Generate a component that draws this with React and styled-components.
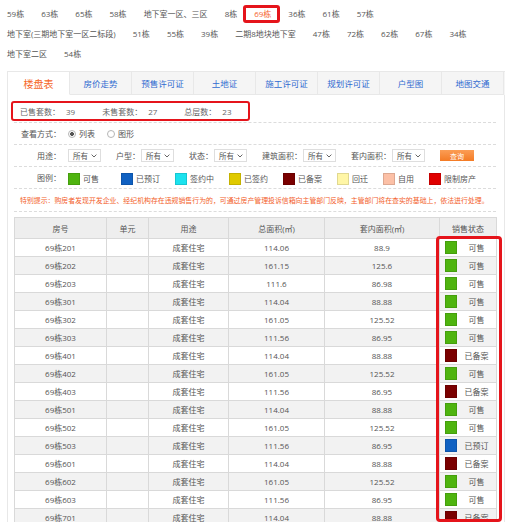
import React from "react";
import styled, { createGlobalStyle, css } from "styled-components";

const GlobalStyle = createGlobalStyle`
  html, body {
    margin: 0;
    padding: 0;
    overflow: hidden;
    background: #fff;
  }
  body {
    font-family: "Open Sans", "Noto Sans CJK SC", sans-serif;
    font-size: 8px;
    color: #555;
  }
`;

const linkRows = [
  ["59栋", "63栋", "65栋", "58栋", "地下室一区、三区", "8栋", "69栋", "36栋", "61栋", "57栋"],
  ["地下室(三期地下室一区二标段)", "51栋", "55栋", "39栋", "二期8地块地下室", "47栋", "72栋", "62栋", "67栋", "34栋"],
  ["地下室二区", "54栋"],
];

const tabs = ["楼盘表", "房价走势", "预售许可证", "土地证", "施工许可证", "规划许可证", "户型图", "地图交通"];

const legend = [
  ["可售", "#4fb40f"],
  ["已预订", "#1061c2"],
  ["签约中", "#1be2ee"],
  ["已签约", "#e0ca00"],
  ["已备案", "#7a0000"],
  ["回迁", "#fff6a6"],
  ["自用", "#fcc0a6"],
  ["限制房产", "#e00000"],
];

const statusColors = {
  可售: "#4fb40f",
  已预订: "#1061c2",
  已备案: "#7a0000",
};

const rows = [
  ["69栋201", "114.06", "88.9", "可售"],
  ["69栋202", "161.15", "125.6", "可售"],
  ["69栋203", "111.6", "86.98", "可售"],
  ["69栋301", "114.04", "88.88", "可售"],
  ["69栋302", "161.05", "125.52", "可售"],
  ["69栋303", "111.56", "86.95", "可售"],
  ["69栋401", "114.04", "88.88", "已备案"],
  ["69栋402", "161.05", "125.52", "可售"],
  ["69栋403", "111.56", "86.95", "已备案"],
  ["69栋501", "114.04", "88.88", "可售"],
  ["69栋502", "161.05", "125.52", "可售"],
  ["69栋503", "111.56", "86.95", "已预订"],
  ["69栋601", "114.04", "88.88", "已备案"],
  ["69栋602", "161.05", "125.52", "可售"],
  ["69栋603", "111.56", "86.95", "可售"],
  ["69栋701", "114.04", "88.88", "已备案"],
];

const Chevron = () => (
  <svg width="6" height="4" viewBox="0 0 6 4">
    <path d="M0.6 0.6 L3 3 L5.4 0.6" fill="none" stroke="#666" strokeWidth="1" />
  </svg>
);

const App = () => {
  return (
    <Page>
      <GlobalStyle />
      <LinkArea>
        {linkRows.map((row, i) => (
          <LinkRow key={i}>
            {row.map((name) => (
              <LinkItem key={name} $active={name === "69栋"}>
                {name}
              </LinkItem>
            ))}
          </LinkRow>
        ))}
      </LinkArea>

      <TabBar>
        {tabs.map((t, i) => (
          <Tab key={t} $active={i === 0}>
            {t}
          </Tab>
        ))}
      </TabBar>

      <Content>
        <StatsRow>
          <StatsBox>
            <StatItem>
              已售套数：<StatValue>39</StatValue>
            </StatItem>
            <StatItem>
              未售套数：<StatValue>27</StatValue>
            </StatItem>
            <StatItem>
              总层数：<StatValue>23</StatValue>
            </StatItem>
          </StatsBox>
        </StatsRow>

        <FormRow>
          <Label>查看方式：</Label>
          <Radio>
            <RadioDot $checked />
            列表
          </Radio>
          <Radio>
            <RadioDot />
            图形
          </Radio>
        </FormRow>

        <FormRow>
          <Label>用途：</Label>
          <Select>
            所有
            <Chevron />
          </Select>
          <FilterLabel>户型：</FilterLabel>
          <Select>
            所有
            <Chevron />
          </Select>
          <FilterLabel>状态：</FilterLabel>
          <Select>
            所有
            <Chevron />
          </Select>
          <FilterLabel>建筑面积：</FilterLabel>
          <Select>
            所有
            <Chevron />
          </Select>
          <FilterLabel>套内面积：</FilterLabel>
          <Select>
            所有
            <Chevron />
          </Select>
          <QueryButton>查询</QueryButton>
        </FormRow>

        <FormRow>
          <Label>图例：</Label>
          {legend.map(([name, color], i) => (
            <LegendItem key={name} $wide={i === 0}>
              <Swatch $color={color} />
              {name}
            </LegendItem>
          ))}
        </FormRow>

        <WarningRow>
          特别提示：购房者发现开发企业、经纪机构存在违规销售行为的，可通过房产管理投诉信箱向主管部门反映，主管部门将在查实的基础上，依法进行处理。
        </WarningRow>

        <TableWrap>
          <Table>
            <colgroup>
              <col style={{ width: 92 }} />
              <col style={{ width: 42 }} />
              <col style={{ width: 80 }} />
              <col style={{ width: 96 }} />
              <col style={{ width: 115 }} />
              <col style={{ width: 57 }} />
            </colgroup>
            <thead>
              <tr>
                <Th>房号</Th>
                <Th>单元</Th>
                <Th>用途</Th>
                <Th>总面积(㎡)</Th>
                <Th>套内面积(㎡)</Th>
                <Th>销售状态</Th>
              </tr>
            </thead>
            <tbody>
              {rows.map(([room, total, inner, status], i) => (
                <Tr key={room} $alt={i % 2 === 1}>
                  <Td>{room}</Td>
                  <Td />
                  <Td>成套住宅</Td>
                  <Td>{total}</Td>
                  <Td>{inner}</Td>
                  <Td>
                    <StatusCell>
                      <Swatch $color={statusColors[status]} $cell />
                      <StatusText>{status}</StatusText>
                    </StatusCell>
                  </Td>
                </Tr>
              ))}
            </tbody>
          </Table>
          <StatusHighlight />
        </TableWrap>
      </Content>
    </Page>
  );
};

const Page = styled.div`
  width: 512px;
  padding-left: 7px;
  box-sizing: border-box;
`;

const LinkArea = styled.div`
  padding-top: 4px;
`;

const LinkRow = styled.div`
  display: flex;
  align-items: center;
  gap: 17px;
  height: 20px;
  white-space: nowrap;
`;

const LinkItem = styled.span`
  display: inline-block;
  line-height: 12px;
  color: #555;
  ${(p) =>
    p.$active &&
    css`
      position: relative;
      color: #f5622a;
      &::after {
        content: "";
        position: absolute;
        left: -11px;
        right: -9px;
        top: -3px;
        bottom: -3px;
        border: 3px solid #e5141b;
        border-radius: 3px;
      }
    `}
`;

const TabBar = styled.div`
  display: flex;
  margin-top: 7px;
  width: 498px;
  height: 24px;
  background: #f5f5f5;
  border-top: 1px solid #e8e8e8;
  border-left: 1px solid #e8e8e8;
  box-sizing: border-box;
`;

const Tab = styled.div`
  width: 62px;
  display: flex;
  align-items: center;
  justify-content: center;
  box-sizing: border-box;
  border-right: 1px solid #e8e8e8;
  border-bottom: 1px solid #e8e8e8;
  color: #2f6ad0;
  font-size: 8.5px;
  ${(p) =>
    p.$active &&
    css`
      background: #fff;
      border-bottom-color: #fff;
      color: #f5661f;
      font-size: 10px;
    `}
`;

const Content = styled.div`
  width: 498px;
  box-sizing: border-box;
  border-left: 1px solid #e8e8e8;
  border-right: 1px solid #e8e8e8;
  padding: 0 8px 0 6px;
`;

const StatsRow = styled.div`
  padding: 6px 0 1px;
  border-bottom: 1px dashed #dcdcdc;
`;

const StatsBox = styled.div`
  display: flex;
  align-items: center;
  margin-left: -3px;
  width: 239px;
  height: 20px;
  box-sizing: border-box;
  padding-left: 7px;
  border: 2.5px solid #e5141b;
  border-radius: 3px;
  color: #666;
`;

const StatItem = styled.span`
  margin-right: 27px;
  white-space: nowrap;
`;

const StatValue = styled.span`
  margin-left: 6px;
`;

const FormRow = styled.div`
  display: flex;
  align-items: center;
  height: 21px;
  border-bottom: 1px dashed #dcdcdc;
  white-space: nowrap;
`;

const Label = styled.span`
  width: 47px;
  margin-right: 7px;
  flex-shrink: 0;
  text-align: right;
  color: #555;
`;

const Radio = styled.span`
  display: flex;
  align-items: center;
  gap: 3px;
  margin-right: 12px;
  color: #555;
`;

const RadioDot = styled.span`
  width: 8px;
  height: 8px;
  box-sizing: border-box;
  border-radius: 50%;
  border: 1px solid #b5b5b5;
  background: ${(p) => (p.$checked ? "radial-gradient(circle, #555 0 1.7px, #fff 2.2px)" : "#fff")};
`;

const FilterLabel = styled.span`
  margin-left: 15px;
  margin-right: 1px;
  color: #555;
`;

const Select = styled.span`
  display: flex;
  align-items: center;
  justify-content: space-between;
  width: 33px;
  height: 13px;
  box-sizing: border-box;
  padding: 0 3px 0 4px;
  border: 1px solid #dedede;
  color: #555;
  font-size: 7.5px;
`;

const QueryButton = styled.span`
  display: flex;
  align-items: center;
  justify-content: center;
  margin-left: 15px;
  width: 34px;
  height: 11px;
  background: linear-gradient(#fb9d55, #f47b25);
  color: #fff;
  font-size: 7px;
`;

const LegendItem = styled.span`
  display: flex;
  align-items: center;
  gap: 3px;
  margin-right: ${(p) => (p.$wide ? "22px" : "15px")};
  padding-top: 2px;
  color: #555;
`;

const Swatch = styled.span`
  display: inline-block;
  width: 12px;
  height: ${(p) => (p.$cell ? "13px" : "12px")};
  box-sizing: border-box;
  background: ${(p) => p.$color};
  border: 1px solid rgba(0, 0, 0, 0.12);
  flex-shrink: 0;
`;

const WarningRow = styled.div`
  display: flex;
  align-items: center;
  height: 22px;
  padding-left: 6px;
  border-bottom: 1px dashed #dcdcdc;
  color: #f3602a;
  font-size: 6.9px;
  white-space: nowrap;
`;

const TableWrap = styled.div`
  position: relative;
  margin-top: 5px;
`;

const Table = styled.table`
  width: 482px;
  border-collapse: collapse;
  table-layout: fixed;
  font-size: 8px;
  color: #555;
`;

const Th = styled.th`
  height: 20px;
  padding: 0;
  font-weight: normal;
  background: #eeeeee;
  border: 1px solid #d9d9d9;
`;

const Tr = styled.tr`
  background: ${(p) => (p.$alt ? "#f2f2f2" : "#fff")};
`;

const Td = styled.td`
  height: 17px;
  padding: 0;
  text-align: center;
  border: 1px solid #d9d9d9;
  white-space: nowrap;
`;

const StatusCell = styled.div`
  display: flex;
  align-items: center;
  padding-left: 5px;
`;

const StatusText = styled.span`
  flex: 1;
  text-align: center;
`;

const StatusHighlight = styled.div`
  position: absolute;
  left: 422px;
  top: 19px;
  width: 66px;
  height: 286px;
  box-sizing: border-box;
  border: 3px solid #e5141b;
  border-radius: 4px;
  pointer-events: none;
`;

export default App;
